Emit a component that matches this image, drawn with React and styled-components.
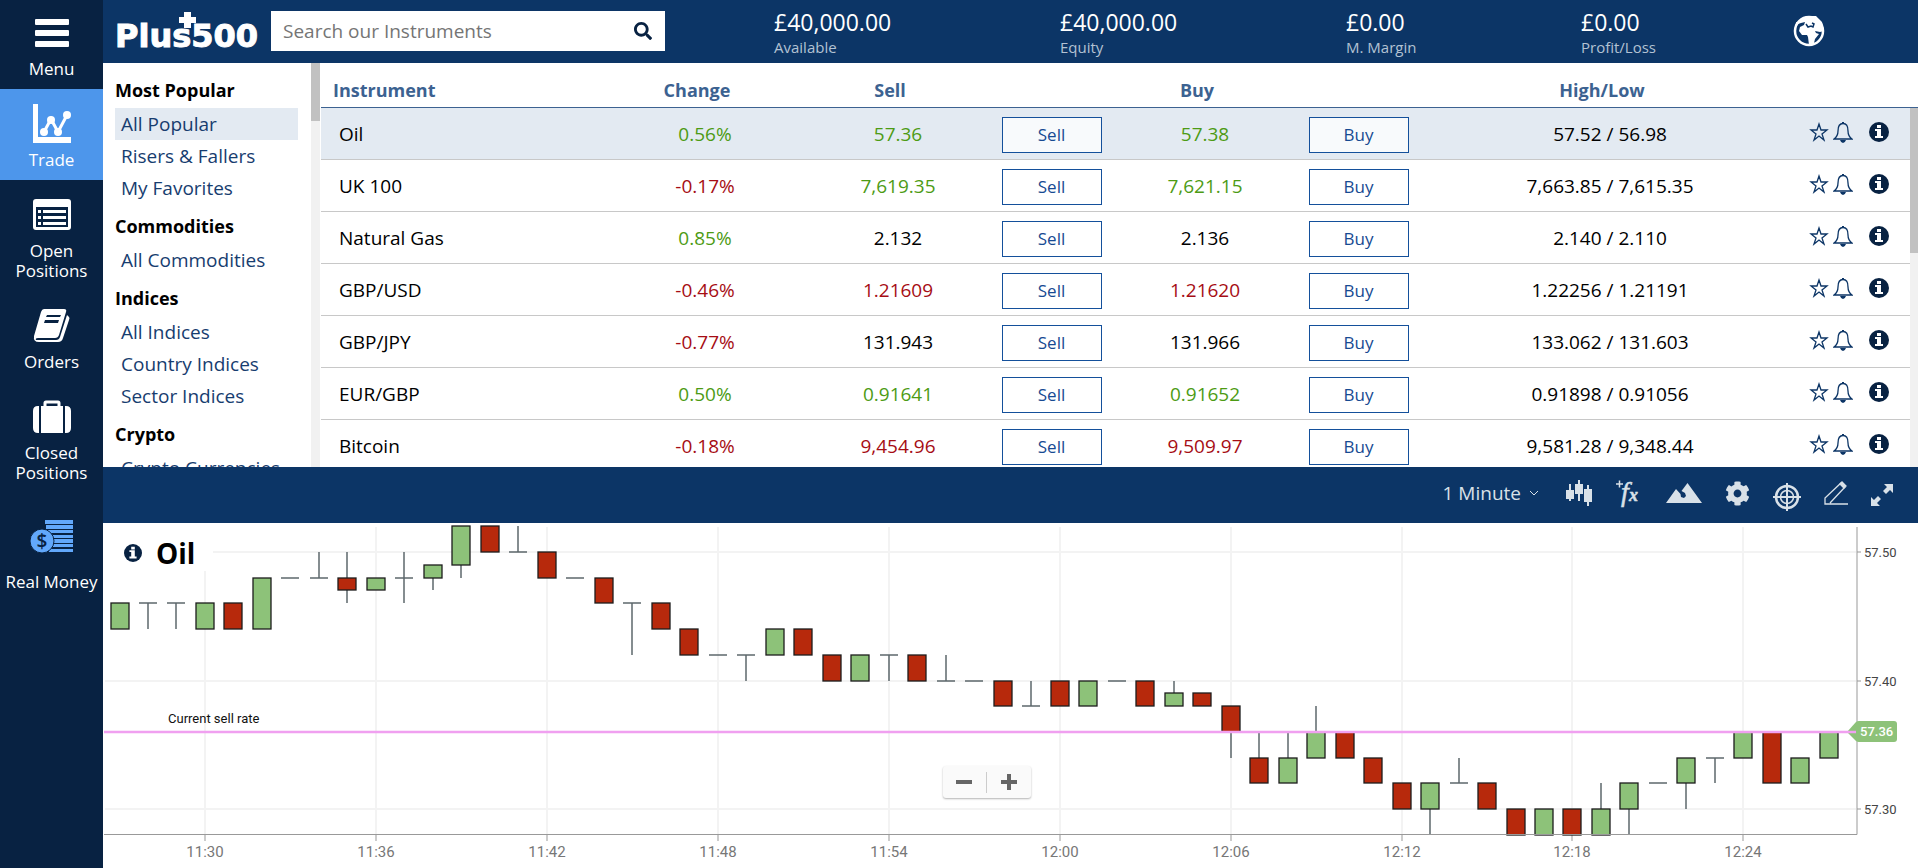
import React from 'react';
import styled, { createGlobalStyle } from 'styled-components';
import { FaSearch, FaCog } from 'react-icons/fa';

const GlobalStyle = createGlobalStyle`
    * {
        box-sizing: border-box;
    }
    body {
        margin: 0;
        font-family: "Open Sans", "Noto Sans", sans-serif;
        color: #000;
        background: #fff;
    }
    button {
        font-family: inherit;
        cursor: pointer;
    }
`;

const categories = [
    { title: 'Most Popular', items: ['All Popular', 'Risers & Fallers', 'My Favorites'] },
    { title: 'Commodities', items: ['All Commodities'] },
    { title: 'Indices', items: ['All Indices', 'Country Indices', 'Sector Indices'] },
    { title: 'Crypto', items: ['Crypto Currencies'] },
];

const instruments = [
    { name: 'Oil', change: '0.56%', sell: '57.36', buy: '57.38', range: '57.52 / 56.98', tick: 'up' },
    { name: 'UK 100', change: '-0.17%', sell: '7,619.35', buy: '7,621.15', range: '7,663.85 / 7,615.35', tick: 'up' },
    { name: 'Natural Gas', change: '0.85%', sell: '2.132', buy: '2.136', range: '2.140 / 2.110' },
    { name: 'GBP/USD', change: '-0.46%', sell: '1.21609', buy: '1.21620', range: '1.22256 / 1.21191', tick: 'down' },
    { name: 'GBP/JPY', change: '-0.77%', sell: '131.943', buy: '131.966', range: '133.062 / 131.603' },
    { name: 'EUR/GBP', change: '0.50%', sell: '0.91641', buy: '0.91652', range: '0.91898 / 0.91056', tick: 'up' },
    { name: 'Bitcoin', change: '-0.18%', sell: '9,454.96', buy: '9,509.97', range: '9,581.28 / 9,348.44', tick: 'down' },
];

const stats = [
    { value: '£40,000.00', label: 'Available', grow: 286 },
    { value: '£40,000.00', label: 'Equity', grow: 286 },
    { value: '£0.00', label: 'M. Margin', grow: 235 },
    { value: '£0.00', label: 'Profit/Loss', grow: 212 },
];

// [open, close, high, low] in hundredths above 57.00, one per minute from 11:27
const candles = [
    [44, 46], [46, 46, 46, 44], [46, 46, 46, 44], [44, 46], [46, 44], [44, 48],
    [48, 48], [48, 48, 50, 48], [48, 47, 50, 46], [47, 48], [48, 48, 50, 46], [48, 49, 49, 47],
    [49, 52, 52, 48], [52, 50], [50, 50, 52, 50], [50, 48], [48, 48], [48, 46],
    [46, 46, 46, 42], [46, 44], [44, 42], [42, 42], [42, 42, 42, 40], [42, 44],
    [44, 42], [42, 40], [40, 42], [42, 42, 42, 40], [42, 40], [40, 40, 42, 40],
    [40, 40], [40, 38], [38, 38, 40, 38], [40, 38], [38, 40], [40, 40],
    [40, 38], [38, 39, 40, 38], [39, 38], [38, 36, 38, 34], [34, 32, 36, 32], [32, 34, 36, 32],
    [34, 36, 38, 34], [36, 34], [34, 32], [32, 30], [30, 32, 32, 28], [32, 32, 34, 32],
    [32, 30], [30, 28], [28, 30], [30, 28], [28, 30, 32, 28], [30, 32, 32, 28],
    [32, 32], [32, 34, 34, 30], [34, 34, 34, 32], [34, 36], [36, 32], [32, 34],
    [34, 36],
];

const times = ['11:30', '11:36', '11:42', '11:48', '11:54', '12:00', '12:06', '12:12', '12:18', '12:24'];

const xAt = (index) => Math.round(16.5 + index * 28.49);
const yAt = (price) => Math.round(157.5 + (40 - price) * 12.87);

const MenuIcon = () => (
    <svg width="34" height="28" viewBox="0 0 34 28" fill="#fff" aria-hidden="true">
        <rect width="34" height="6" rx="1" />
        <rect y="11" width="34" height="6" rx="1" />
        <rect y="22" width="34" height="6" rx="1" />
    </svg>
);

const TradeIcon = () => (
    <svg width="40" height="40" viewBox="0 0 40 40" fill="#fff" aria-hidden="true">
        <path d="M1 0h5v33h33v6H1z" />
        <path d="M12 28l7-13 7 13 9-17" fill="none" stroke="#fff" strokeWidth="3" />
        <circle cx="12" cy="28" r="4" />
        <circle cx="19" cy="16" r="4" />
        <circle cx="26" cy="28" r="4" />
        <circle cx="35" cy="11" r="4" />
    </svg>
);

const PositionsIcon = () => (
    <svg width="40" height="32" viewBox="0 0 40 32" aria-hidden="true">
        <rect x="1" width="38" height="31" rx="3" fill="#fff" />
        <path d="M4 8h32v20H4z" fill="#082242" />
        <path d="M6 11h3v3H6zM6 17h3v3H6zM6 23h3v3H6zM11 11h23v3H11zM11 17h23v3H11zM11 23h23v3H11z" fill="#fff" />
    </svg>
);

const OrdersIcon = () => (
    <svg width="38" height="34" viewBox="0 0 38 34" aria-hidden="true">
        <path d="M11 0h20q3 0 2 3l-7 23q-1 3-4 3H5q-3 0-2 2h20q3 0 4-3L34 6l2 2q1 1 0 3l-6 18q-1 4-5 4H6q-6 0-5-6L8 3q1-3 3-3z" fill="#fff" />
        <path d="M14 6h14l-1 2H13zM12 11h14l-1 3H11z" fill="#082242" />
    </svg>
);

const CaseIcon = () => (
    <svg width="40" height="34" viewBox="0 0 40 34" fill="#fff" aria-hidden="true">
        <path d="M9 6h22v27H9zM7 6v27H6q-5 0-5-5V11q0-5 5-5zM33 6v27h1q5 0 5-5V11q0-5-5-5z" />
        <path d="M13 7V3q0-1 1-1h12q1 0 1 1v4" fill="none" stroke="#fff" strokeWidth="3" />
    </svg>
);

const MoneyIcon = () => (
    <svg width="44" height="34" viewBox="0 0 44 34" aria-hidden="true">
        <path d="M15 0h28v4H15zM16 5h27v4H16zM18 10h25v3H18zM20 15h23v3H20zM22 19h21v4H22zM22 24h21v3H22zM19 29h24v3H19z" fill="#62a8fb" />
        <circle cx="12" cy="21" r="12" fill="#62a8fb" stroke="#082242" />
        <text x="12" y="28" fontSize="19" fontWeight="600" textAnchor="middle" fill="#082242">$</text>
    </svg>
);

const GlobeIcon = () => (
    <svg width="32" height="32" viewBox="0 0 32 32" aria-hidden="true">
        <circle cx="16" cy="16" r="14" fill="none" stroke="#fff" strokeWidth="2.5" />
        <path d="M9 3l5-2h9l6 6 2 9-4 1-5-1 1 2 3 1-4 5-1 4-2 2h-3l-1-8-1-2-5 0-3-4 1-4 4-2 1-3-4 1-3 1-3 1z" fill="#fff" />
        <path d="M3 7l3 1-3 4z" fill="#fff" />
        <path d="M13 9l2 3 3-1 2 1 1-3-2-1" fill="none" stroke="#0c3566" strokeWidth="1.5" />
    </svg>
);

const StarIcon = () => (
    <svg width="20" height="20" viewBox="0 0 20 20" aria-hidden="true">
        <path d="M10 2l2 6h6l-5 4 2 6-5-4-5 4 2-6-5-4h6z" fill="none" stroke="#0c3566" strokeWidth="1.3" />
    </svg>
);

const BellIcon = () => (
    <svg width="20" height="22" viewBox="0 0 20 22" aria-hidden="true">
        <path d="M10 2.5C6 2.5 5 6 5 10c0 4-1 6-4 8h18c-3-2-4-4-4-8 0-4-1-7.5-5-7.5z" fill="none" stroke="#0c3566" strokeWidth="1.3" />
        <path d="M9 1h2v2H9zM7 19h6q-1 3-3 3t-3-3z" fill="#0c3566" />
    </svg>
);

const InfoIcon = ({ size }) => (
    <svg width={size} height={size} viewBox="0 0 20 20" aria-hidden="true">
        <circle cx="10" cy="10" r="10" fill="#082242" />
        <path d="M8 3h4v3H8zM6 7h6v7h2v2H6v-2h2V9H6z" fill="#fff" />
    </svg>
);

const SideItem = ({ icon, label, ...rest }) => (
    <SideButton {...rest}>
        <SideIcon>{icon}</SideIcon>
        <span>{label}</span>
    </SideButton>
);

const Chart = () => (
    <ChartSvg viewBox="0 0 1815 345" role="img" aria-label="Oil price chart">
        {[50, 40, 30].map((price) => (
            <path key={price} d={`M2 ${yAt(price)}H1753`} stroke="#f3f3f3" strokeWidth="2" />
        ))}
        {times.map((time, i) => (
            <g key={time}>
                <path d={`M${xAt(3 + i * 6)} 4V311`} stroke="#f3f3f3" strokeWidth="2" />
                <path d={`M${xAt(3 + i * 6)} 312v6`} stroke="#999" />
                <text x={xAt(3 + i * 6)} y="334" fontSize="15" textAnchor="middle" fill="#777">{time}</text>
            </g>
        ))}
        {candles.map(([open, close, high, low], i) => {
            const x = xAt(i);
            const top = yAt(Math.max(open, close));
            const bottom = yAt(Math.min(open, close));
            return (
                <g key={i}>
                    {high && <path d={`M${x} ${yAt(high)}V${yAt(low)}`} stroke="#5d676b" strokeWidth="1.5" />}
                    {open === close ? (
                        <path d={`M${x - 9} ${top}h18`} stroke="#5d676b" strokeWidth="1.5" />
                    ) : (
                        <rect
                            x={x - 9}
                            y={top}
                            width="18"
                            height={bottom - top}
                            fill={close > open ? '#8dc279' : '#b7290c'}
                            stroke="#1c1c1c"
                            strokeWidth="1.3"
                        />
                    )}
                </g>
            );
        })}
        <path d="M1 311.5H1754V4" fill="none" stroke="#999" />
        {[50, 40, 30].map((price) => (
            <g key={price}>
                <path d={`M1754 ${yAt(price)}h4`} stroke="#999" />
                <text x="1761" y={yAt(price) + 5} fontSize="13" fill="#444">57.{price}</text>
            </g>
        ))}
        <text x="65" y="200" fontSize="13" fill="#111">Current sell rate</text>
        <path d="M1744 209l9-10q1-1 3-1h35q3 0 3 3v15q0 3-3 3h-35q-2 0-3-1z" fill="#8dc279" />
        <path d="M1 209H1753" stroke="#f0a0f0" strokeWidth="2.5" />
        <text x="1757" y="213" fontSize="13" fontWeight="500" fill="#fff">57.36</text>
    </ChartSvg>
);

const App = () => (
    <Page>
        <GlobalStyle />
        <Sidebar aria-label="Main">
            <SideItem $height={89} $pad={11} icon={<MenuIcon />} label="Menu" />
            <SideItem $height={91} $active icon={<TradeIcon />} label="Trade" />
            <SideItem $height={111} icon={<PositionsIcon />} label="Open Positions" />
            <SideItem $height={91} icon={<OrdersIcon />} label="Orders" />
            <SideItem $height={120} icon={<CaseIcon />} label="Closed Positions" />
            <SideItem $height={106} $tall icon={<MoneyIcon />} label="Real Money" />
        </Sidebar>
        <Main>
            <Header>
                <Logo viewBox="0 0 146 46" role="img" aria-label="Plus500">
                    <text x="0" y="39" fontSize="32" fontWeight="700" fill="#fff" stroke="#fff">Plus500</text>
                    <path d="M69 4h7v5h5v6h-5v5h-7v-5h-5V9h5z" fill="#fff" />
                </Logo>
                <Search>
                    <SearchInput type="text" placeholder="Search our Instruments" aria-label="Search our Instruments" />
                    <SearchButton aria-label="Search"><FaSearch size={18} /></SearchButton>
                </Search>
                <Stats>
                    {stats.map((stat) => (
                        <Stat key={stat.label} $grow={stat.grow}>
                            <StatValue>{stat.value}</StatValue>
                            <StatLabel>{stat.label}</StatLabel>
                        </Stat>
                    ))}
                    <HeaderButton aria-label="Language"><GlobeIcon /></HeaderButton>
                </Stats>
            </Header>
            <Market>
                <Categories aria-label="Categories">
                    {categories.map((category) => (
                        <section key={category.title}>
                            <CategoryTitle>{category.title}</CategoryTitle>
                            {category.items.map((item) => (
                                <CategoryLink key={item} href="#" $active={item === 'All Popular'}>{item}</CategoryLink>
                            ))}
                        </section>
                    ))}
                </Categories>
                <Scrollbar><Thumb $height={58} /></Scrollbar>
                <TableWrap>
                    <Table>
                        <colgroup>
                            <Col $width={283} />
                            <Col $width={202} />
                            <Col $width={184} />
                            <Col $width={123} />
                            <Col $width={184} />
                            <Col $width={123} />
                            <Col $width={380} />
                            <Col $width={110} />
                        </colgroup>
                        <thead>
                            <tr>
                                <Th $first>Instrument</Th>
                                <Th>Change</Th>
                                <Th>Sell</Th>
                                <Th />
                                <Th>Buy</Th>
                                <Th />
                                <Th>High/Low</Th>
                                <Th />
                            </tr>
                        </thead>
                        <tbody>
                            {instruments.map((row, i) => (
                                <Row key={row.name} $selected={i === 0}>
                                    <Td $first>{row.name}</Td>
                                    <Td $tick={row.change.startsWith('-') ? 'down' : 'up'}>{row.change}</Td>
                                    <Td $tick={row.tick}>{row.sell}</Td>
                                    <Td><DealButton>Sell</DealButton></Td>
                                    <Td $tick={row.tick}>{row.buy}</Td>
                                    <Td><DealButton>Buy</DealButton></Td>
                                    <Td>{row.range}</Td>
                                    <Td>
                                        <RowTools>
                                            <IconButton aria-label="Add to favorites"><StarIcon /></IconButton>
                                            <IconButton aria-label="Add alert"><BellIcon /></IconButton>
                                            <IconButton $spaced aria-label="Details"><InfoIcon size={20} /></IconButton>
                                        </RowTools>
                                    </Td>
                                </Row>
                            ))}
                        </tbody>
                    </Table>
                </TableWrap>
                <TableScroll>
                    <ScrollHead />
                    <Thumb $height={145} />
                </TableScroll>
            </Market>
            <Toolbar>
                <PeriodButton>
                    1 Minute
                    <svg width="10" height="7" viewBox="0 0 10 7" aria-hidden="true">
                        <path d="M1 1l4 4 4-4" fill="none" stroke="#d9e1e8" />
                    </svg>
                </PeriodButton>
                <ToolButton aria-label="Chart type">
                    <svg width="26" height="26" viewBox="0 0 26 26" fill="#d9e1e8" aria-hidden="true">
                        <path d="M0 10h3V4h2v6h3v9H5v2H3v-2H0zM9 4h3V0h2v4h3v10h-3v7h-2v-7H9zM18 9h3V5h2v4h3v13h-3v4h-2v-4h-3z" />
                    </svg>
                </ToolButton>
                <ToolButton aria-label="Indicators">
                    <svg width="28" height="36" viewBox="0 0 28 36" aria-hidden="true">
                        <path d="M1 9h7M4.5 5.5v7" stroke="#d9e1e8" strokeWidth="1.5" />
                        <FxText x="6" y="26" fontSize="28">f</FxText>
                        <FxText x="14" y="26" fontSize="18" fontWeight="700">x</FxText>
                    </svg>
                </ToolButton>
                <ToolButton aria-label="Area">
                    <svg width="36" height="20" viewBox="0 0 36 20" fill="#d9e1e8" aria-hidden="true">
                        <path d="M0 20L10 6l4.500 5 .5 3 3 1 2-2-1-3-3.500-2L21.500 0 36 20z" />
                    </svg>
                </ToolButton>
                <ToolButton aria-label="Settings"><FaCog size={25} /></ToolButton>
                <ToolButton aria-label="Crosshair" $drop={8}>
                    <svg width="28" height="28" viewBox="0 0 28 28" fill="none" stroke="#d9e1e8" aria-hidden="true">
                        <circle cx="14" cy="14" r="11" strokeWidth="2.5" />
                        <circle cx="14" cy="14" r="6.5" strokeWidth="1.5" />
                        <path d="M14 0v28M0 14h28" strokeWidth="2" />
                    </svg>
                </ToolButton>
                <ToolButton aria-label="Draw">
                    <svg width="24" height="24" viewBox="0 0 24 24" fill="none" stroke="#d9e1e8" strokeWidth="1.3" aria-hidden="true">
                        <path d="M24 23H1v-6L17 2l4 4L6 22" />
                        <path d="M16 3l2-2 4 4-2 2z" fill="#d9e1e8" />
                    </svg>
                </ToolButton>
                <ToolButton aria-label="Full screen" $drop={4}>
                    <svg width="22" height="22" viewBox="0 0 22 22" fill="#d9e1e8" aria-hidden="true">
                        <path d="M13 0h9v9l-3-3-4 4-3-3 4-4zM0 13l3 3 4-4 3 3-4 4 3 3H0z" />
                    </svg>
                </ToolButton>
            </Toolbar>
            <ChartPanel>
                <Chart />
                <ChartTitle>
                    <InfoIcon size={18} />
                    <h1>Oil</h1>
                </ChartTitle>
                <Zoom>
                    <ZoomButton aria-label="Zoom out">
                        <svg width="16" height="16" viewBox="0 0 16 16"><path d="M0 8h16" stroke="#666" strokeWidth="4" /></svg>
                    </ZoomButton>
                    <ZoomDivider />
                    <ZoomButton aria-label="Zoom in">
                        <svg width="16" height="16" viewBox="0 0 16 16"><path d="M0 8h16M8 0v16" stroke="#666" strokeWidth="4" /></svg>
                    </ZoomButton>
                </Zoom>
            </ChartPanel>
        </Main>
    </Page>
);

export default App;

const Page = styled.div`
    display: flex;
    height: 100vh;
    overflow: hidden;
`;

const Sidebar = styled.nav`
    flex: none;
    width: 103px;
    display: flex;
    flex-direction: column;
    background: #082242;
`;

const SideButton = styled.button`
    height: ${({ $height }) => $height}px;
    display: flex;
    flex-direction: column;
    align-items: center;
    gap: ${({ $tall }) => ($tall ? 13 : 4)}px;
    padding: ${({ $pad }) => $pad || 13}px 0 0;
    border: 0;
    color: #fff;
    background: ${({ $active }) => ($active ? '#4d96eb' : 'none')};
    font-size: 17px;
    line-height: 20px;
`;

const SideIcon = styled.span`
    height: 44px;
    display: flex;
    align-items: center;
    justify-content: center;
`;

const Main = styled.main`
    flex: 1;
    min-width: 0;
    display: grid;
    grid-template-rows: auto minmax(0, 404fr) auto minmax(0, 345fr);
`;

const Header = styled.header`
    height: 63px;
    display: flex;
    align-items: center;
    padding: 0 0 2px 12px;
    background: #0c3566;
`;

const Logo = styled.svg`
    width: 146px;
    height: 46px;
    margin-right: 10px;
    font-family: "DejaVu Sans", sans-serif;
`;

const Search = styled.div`
    width: 394px;
    height: 40px;
    display: flex;
    background: #fff;
`;

const SearchInput = styled.input`
    flex: 1;
    min-width: 0;
    padding: 0 12px;
    border: 0;
    font-family: inherit;
    font-size: 19px;
    &::placeholder {
        color: #757575;
    }
`;

const SearchButton = styled.button`
    width: 44px;
    border: 0;
    background: none;
    color: #082242;
    display: flex;
    align-items: center;
    justify-content: center;
`;

const Stats = styled.div`
    flex: 1;
    display: flex;
    align-items: center;
    padding: 0 93px 0 109px;
`;

const Stat = styled.div`
    flex: ${({ $grow }) => $grow} 1 0;
    padding-top: 4px;
`;

const StatValue = styled.div`
    color: #fff;
    font-size: 23px;
    line-height: 28px;
`;

const StatLabel = styled.div`
    color: #b3c2d3;
    font-size: 15px;
    line-height: 22px;
`;

const HeaderButton = styled.button`
    padding: 0;
    border: 0;
    background: none;
    display: flex;
`;

const Market = styled.div`
    display: flex;
    min-height: 0;
    overflow: hidden;
`;

const Categories = styled.nav`
    width: 208px;
    flex: none;
    padding: 5px 13px 0 12px;
    overflow: hidden;
`;

const CategoryTitle = styled.h2`
    margin: 0;
    font-size: 18px;
    font-weight: 700;
    line-height: 40px;
    padding-top: 2px;
    height: 40px;
`;

const CategoryLink = styled.a`
    display: block;
    padding-left: 6px;
    font-size: 19px;
    line-height: 32px;
    color: #173d6f;
    text-decoration: none;
    white-space: nowrap;
    background: ${({ $active }) => ($active ? '#e3eaf2' : 'none')};
`;

const Scrollbar = styled.div`
    width: 9px;
    flex: none;
    margin-right: 1px;
    background: #f1f1f1;
`;

const Thumb = styled.div`
    height: ${({ $height }) => $height}px;
    background: #c1c1c1;
`;

const TableWrap = styled.div`
    flex: 1;
    min-width: 0;
    overflow: hidden;
`;

const Table = styled.table`
    width: 100%;
    table-layout: fixed;
    border-collapse: separate;
    border-spacing: 0;
    font-size: 19px;
`;

const Col = styled.col`
    width: ${({ $width }) => $width}px;
`;

const Th = styled.th`
    height: 45px;
    padding: 10px ${({ $first }) => ($first ? '0 0 12px' : '16px 0 0')};
    border-bottom: 1px solid #3c6291;
    color: #3c6291;
    font-size: 18px;
    font-weight: 700;
    text-align: ${({ $first }) => ($first ? 'left' : 'center')};
`;

const Row = styled.tr`
    background: ${({ $selected }) => ($selected ? '#e3eaf2' : '#fff')};
`;

const tickColors = { up: '#4d9b14', down: '#a60d14' };

const Td = styled.td`
    height: 52px;
    padding: ${({ $first }) => ($first ? '0 0 0 18px' : '0')};
    border-bottom: 1px solid #c8c8c8;
    color: ${({ $tick }) => tickColors[$tick] || '#000'};
    text-align: ${({ $first }) => ($first ? 'left' : 'center')};
`;

const DealButton = styled.button`
    display: block;
    width: 100px;
    height: 36px;
    margin: 2px auto 0;
    padding: 0;
    border: 1px solid #14509b;
    background: rgba(255, 255, 255, 0.75);
    color: #174a92;
    font-size: 17px;
`;

const RowTools = styled.div`
    display: flex;
    align-items: center;
    gap: 4px;
    padding: 0 0 4px 9px;
`;

const IconButton = styled.button`
    display: flex;
    padding: 0;
    margin-left: ${({ $spaced }) => ($spaced ? 12 : 0)}px;
    border: 0;
    background: none;
    color: #082242;
`;

const TableScroll = styled.div`
    width: 8px;
    flex: none;
    background: #f1f1f1;
`;

const ScrollHead = styled.div`
    height: 45px;
    border-bottom: 1px solid #3c6291;
    background: #fff;
`;

const Toolbar = styled.div`
    height: 56px;
    display: flex;
    align-items: center;
    justify-content: flex-end;
    gap: 23px;
    padding: 0 25px 4px 0;
    background: #0c3566;
`;

const PeriodButton = styled.button`
    display: flex;
    align-items: center;
    gap: 8px;
    margin-right: 4px;
    padding: 0;
    border: 0;
    background: none;
    color: #d9e1e8;
    font-size: 19px;
`;

const ToolButton = styled.button`
    display: flex;
    padding: ${({ $drop }) => $drop || 0}px 0 0;
    border: 0;
    background: none;
    color: #d9e1e8;
`;

const FxText = styled.text`
    font-family: "Liberation Serif", serif;
    font-style: italic;
    fill: #d9e1e8;
    stroke: #d9e1e8;
    stroke-width: 0.5;
`;

const ChartPanel = styled.section`
    position: relative;
    min-height: 0;
    background: #fff;
`;

const ChartSvg = styled.svg`
    display: block;
    width: 100%;
    height: 100%;
    font-family: Roboto, sans-serif;
`;

const ChartTitle = styled.div`
    position: absolute;
    top: 0;
    left: 0;
    width: 110px;
    height: 48px;
    display: flex;
    align-items: center;
    gap: 14px;
    padding: 12px 0 0 21px;
    background: #fff;
    h1 {
        margin: 0;
        font-size: 28px;
        font-weight: 700;
        line-height: 32px;
        color: #000;
    }
`;

const Zoom = styled.div`
    position: absolute;
    left: 50%;
    bottom: 70px;
    transform: translateX(-50%);
    width: 88px;
    height: 32px;
    display: flex;
    align-items: center;
    margin-left: -24px;
    border-radius: 3px;
    background: #fafafa;
    box-shadow: 0 1px 2px rgba(0, 0, 0, 0.3);
`;

const ZoomButton = styled.button`
    flex: 1;
    display: flex;
    justify-content: center;
    padding: 0;
    border: 0;
    background: none;
`;

const ZoomDivider = styled.span`
    width: 1px;
    height: 21px;
    background: #ccc;
`;
